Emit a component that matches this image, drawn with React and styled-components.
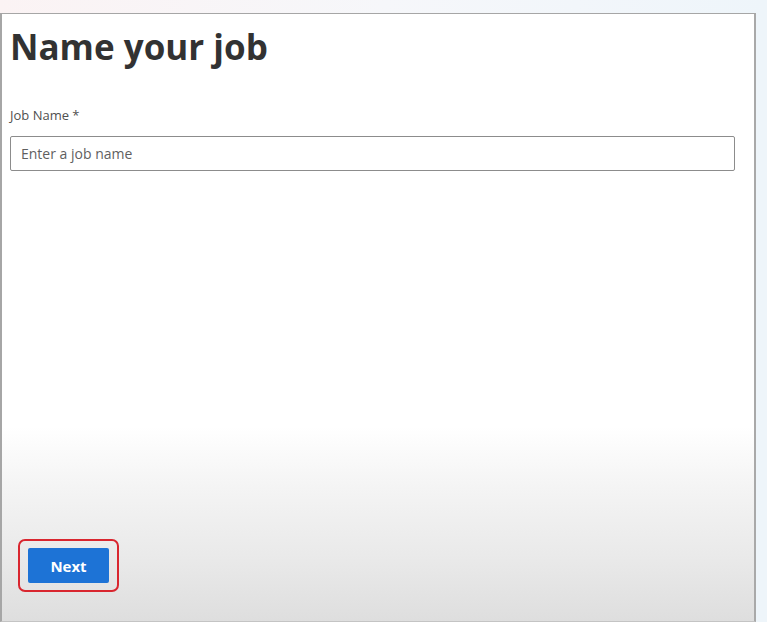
import styled, { createGlobalStyle } from "styled-components";

const GlobalStyle = createGlobalStyle`
  html, body {
    margin: 0;
    padding: 0;
  }
  body {
    width: 767px;
    height: 622px;
    overflow: hidden;
    font-family: "Open Sans", "Noto Sans", sans-serif;
    background: linear-gradient(90deg, #fbf3f4 0%, #f6f7fa 50%, #eef5fa 100%);
  }
`;

const Page = styled.div`
  height: 622px;
  padding-top: 13px;
  padding-right: 11px;
  box-sizing: border-box;
  display: flex;
`;

const Panel = styled.div`
  flex: 1;
  display: flex;
  flex-direction: column;
  border: 1px solid #a6a6a6;
  border-left-width: 2px;
  border-right: 2px solid #a9a9a9;
  border-bottom: 1px solid #c4c4c4;
  background: linear-gradient(
    180deg,
    #ffffff 0%,
    #ffffff 68%,
    #f4f4f4 78%,
    #e9e9e9 90%,
    #dedede 100%
  );
  padding: 0 19px 29px 8px;
`;

const Title = styled.h1`
  margin: 10px 0 0 0;
  font-size: 35px;
  font-weight: 700;
  color: #323232;
  letter-spacing: 0;
  line-height: 46px;
`;

const Label = styled.label`
  display: block;
  margin: 37px 0 12px 0;
  font-size: 13px;
  color: #505050;
  line-height: 17px;
`;

const Input = styled.input`
  height: 35px;
  box-sizing: border-box;
  width: 100%;
  border: 1.5px solid #8c8c8c;
  border-radius: 2px;
  padding: 0 10px;
  font-family: "Open Sans", "Noto Sans", sans-serif;
  font-size: 14px;
  color: #333;
  background: #fff;
  outline: none;

  &::placeholder {
    color: #5f5f5f;
  }
`;

const Footer = styled.div`
  margin-top: auto;
  display: flex;
`;

const Highlight = styled.div`
  margin-left: 8px;
  padding: 7px 8px;
  border: 2.5px solid #d9262f;
  border-radius: 7px;
  display: flex;
`;

const Button = styled.button`
  width: 81px;
  height: 35px;
  border: 0;
  border-radius: 2px;
  background: #1d73d6;
  color: #fff;
  font-family: "Open Sans", "Noto Sans", sans-serif;
  font-size: 15px;
  font-weight: 700;
  cursor: pointer;
`;

export default function App() {
  return (
    <>
      <GlobalStyle />
      <Page>
        <Panel>
          <Title>Name your job</Title>
          <Label htmlFor="job-name">Job Name *</Label>
          <Input id="job-name" placeholder="Enter a job name" />
          <Footer>
            <Highlight>
              <Button>Next</Button>
            </Highlight>
          </Footer>
        </Panel>
      </Page>
    </>
  );
}
